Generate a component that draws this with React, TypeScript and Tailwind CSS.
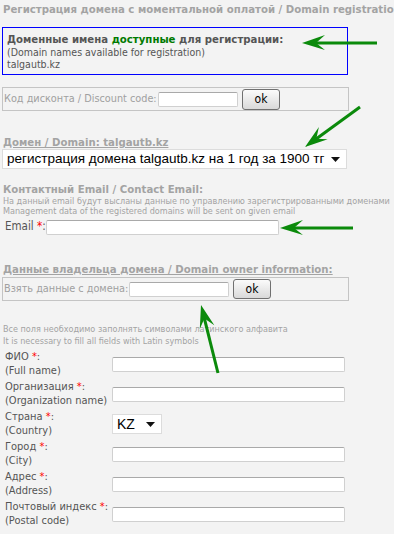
import React from 'react';

const Arrow = ({ from, to }: { from: [number, number]; to: [number, number] }) => {
  const angle = (Math.atan2(to[1] - from[1], to[0] - from[0]) * 180) / Math.PI;
  const len = Math.hypot(to[0] - from[0], to[1] - from[1]);
  return (
    <g transform={`translate(${to[0]} ${to[1]}) rotate(${angle})`}>
      <line x1={-len} y1={0} x2={-12} y2={0} stroke="#0b8a0b" strokeWidth={3} />
      <path d="M0 0 L-23 -7 L-14 0 L-23 8 Z" fill="#0b8a0b" />
    </g>
  );
};

const Field = ({ w }: { w: string }) => (
  <div className={`${w} shrink-0 h-[15px] bg-white border border-[#d0d0d0] border-t-[#a9a9a9] rounded-[2px]`} />
);

const OkButton = ({ h }: { h: string }) => (
  <div
    className={`w-[38px] ${h} shrink-0 flex items-center justify-center rounded-[3px] border border-[#707070] bg-gradient-to-b from-[#fbfbfb] to-[#d9d9d9] text-[12px] text-black`}
  >
    ok
  </div>
);

const Req = () => <span className="text-[#ff0000]">*</span>;

const Heading = ({ children, underline }: { children: React.ReactNode; underline?: boolean }) => (
  <div
    className={`pl-[3px] h-[12px] leading-[12px] text-[11.3px] font-bold text-[#a3a3a3] whitespace-nowrap ${underline ? 'underline' : ''}`}
  >
    {children}
  </div>
);

const rows = [
  { ru: 'ФИО', en: '(Full name)' },
  { ru: 'Организация', en: '(Organization name)' },
  { ru: 'Страна', en: '(Country)', select: true },
  { ru: 'Город', en: '(City)' },
  { ru: 'Адрес', en: '(Address)' },
  { ru: 'Почтовый индекс', en: '(Postal code)' },
];

export default function App() {
  return (
    <div className='relative w-[394px] h-[534px] overflow-hidden bg-[#f3f3f3] font-["DejaVu_Sans_Condensed","DejaVu_Sans",sans-serif]'>
      <div className="pt-[3px] pl-[3px] h-[16px] leading-[13px] text-[11.3px] font-bold text-[#a3a3a3] whitespace-nowrap">
        Регистрация домена с моментальной оплатой / Domain registration
      </div>

      {/* available domains */}
      <div className="ml-[2px] mt-[11px] w-[346px] h-[48px] border border-[#0000ff] pl-[4px] pt-[6px] text-[10.5px] leading-[12px] text-[#555]">
        <div className="font-bold text-[11.3px] whitespace-nowrap">
          Доменные имена <span className="text-[#007a00]">доступные</span> для регистрации:
        </div>
        <div>(Domain names available for registration)</div>
        <div>talgautb.kz</div>
      </div>

      <div className="ml-[2px] mt-[12px] w-[347px] h-[24px] border border-[#c4c4c4] flex items-center text-[10.8px] text-[#a0a0a0]">
        <span className="pl-[1px] w-[155px] shrink-0 whitespace-nowrap">Код дисконта / Discount code:</span>
        <Field w="w-[80px]" />
        <div className="ml-[4px]">
          <OkButton h="h-[21px]" />
        </div>
      </div>

      <div className="mt-[26px]">
        <Heading underline>Домен / Domain: talgautb.kz</Heading>
      </div>
      <div className="ml-[2px] w-[345px] h-[20px] bg-white border border-[#dcdcdc] flex items-center justify-between pl-[4px] pr-[6px] font-['Liberation_Sans',sans-serif] text-[13.5px] text-black">
        <span className="whitespace-nowrap">регистрация домена talgautb.kz на 1 год за 1900 тг</span>
        <svg width="9" height="5" viewBox="0 0 9 5">
          <path d="M0 0 H9 L4.5 5 Z" fill="#111" />
        </svg>
      </div>

      {/* contact email */}
      <div className="mt-[15px]">
        <Heading>Контактный Email / Contact Email:</Heading>
      </div>
      <div className="pl-[3px] text-[9px] leading-[10px] text-[#a3a3a3] whitespace-nowrap">
        <div>На данный email будут высланы данные по управлению зарегистрированными доменами</div>
        <div>Management data of the registered domains will be sent on given email</div>
      </div>
      <div className="mt-[3px] pl-[5px] flex items-center h-[16px] text-[11.5px] text-[#555]">
        <span className="w-[41px] shrink-0 whitespace-nowrap">
          Email <Req />:
        </span>
        <Field w="w-[233px]" />
      </div>

      {/* owner */}
      <div className="mt-[29px]">
        <Heading underline>Данные владельца домена / Domain owner information:</Heading>
      </div>
      <div className="ml-[2px] mt-[1px] w-[347px] h-[24px] border border-[#c4c4c4] flex items-center text-[10.8px] text-[#a0a0a0]">
        <span className="pl-[1px] w-[126px] shrink-0 whitespace-nowrap">Взять данные с домена:</span>
        <Field w="w-[100px]" />
        <div className="ml-[4px]">
          <OkButton h="h-[20px]" />
        </div>
      </div>

      <div className="mt-[22px] pl-[3px] text-[9px] leading-[12px] text-[#a3a3a3] whitespace-nowrap">
        <div>Все поля необходимо заполнять символами латинского алфавита</div>
        <div>It is necessary to fill all fields with Latin symbols</div>
      </div>

      <div className="mt-[3px] pl-[5px] flex flex-col gap-[2px]">
        {rows.map((r) => (
          <div key={r.ru} className="flex items-center h-[28px]">
            <div className="w-[107px] shrink-0 text-[11px] leading-[14px] text-[#555] whitespace-nowrap">
              <div>
                {r.ru} <Req />:
              </div>
              <div>{r.en}</div>
            </div>
            {r.select ? (
              <div className="w-[50px] h-[20px] bg-white border border-[#dcdcdc] flex items-center justify-between pl-[4px] pr-[6px] font-['Liberation_Sans',sans-serif] text-[14px] text-black">
                <span>KZ</span>
                <svg width="9" height="5" viewBox="0 0 9 5">
                  <path d="M0 0 H9 L4.5 5 Z" fill="#111" />
                </svg>
              </div>
            ) : (
              <Field w="w-[233px]" />
            )}
          </div>
        ))}
      </div>

      <svg className="absolute inset-0 pointer-events-none" width="394" height="534">
        <Arrow from={[377, 43]} to={[302, 43]} />
        <Arrow from={[360, 107]} to={[305, 147]} />
        <Arrow from={[353, 228]} to={[280, 228]} />
        <Arrow from={[218, 373]} to={[201, 305]} />
      </svg>
    </div>
  );
}
